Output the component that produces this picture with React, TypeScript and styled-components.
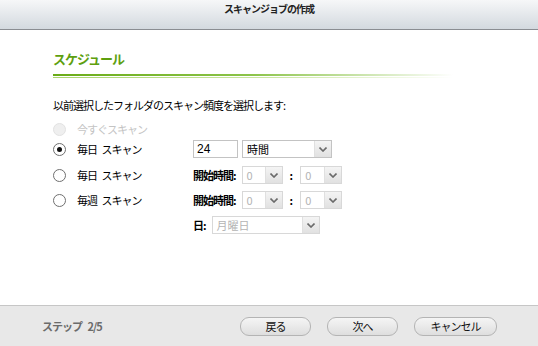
import React from 'react';
import styled, { createGlobalStyle } from 'styled-components';

const GlobalStyle = createGlobalStyle`
  html, body {
    margin: 0;
    padding: 0;
    background: #fff;
  }
  body {
    font-family: 'Noto Sans CJK JP', 'Liberation Sans', sans-serif;
    font-size: 11px;
    color: #000;
  }
`;

const Window = styled.div`
  width: 538px;
  height: 346px;
  display: flex;
  flex-direction: column;
  overflow: hidden;
`;

const Header = styled.div`
  height: 30px;
  flex: none;
  display: flex;
  justify-content: center;
  align-items: flex-start;
  box-sizing: border-box;
  padding-top: 1px;
  background: linear-gradient(#f6f7f8, #d3d9df);
  border-bottom: 1px solid #8a8d92;
`;

const HeaderTitle = styled.div`
  font-size: 10px;
  font-weight: 700;
  letter-spacing: -1px;
  color: #222;
  line-height: 16px;
`;

const Body = styled.div`
  flex: 1;
  padding: 20px 0 0 53px;
`;

const SectionTitle = styled.div`
  font-size: 13px;
  font-weight: 700;
  color: #5e9f0f;
  letter-spacing: -1px;
  line-height: 18px;
`;

const Rule = styled.div`
  width: 400px;
  height: 2px;
  margin-top: 6px;
  background: linear-gradient(90deg, #6aac17 0%, #8cc44a 50%, #ffffff 100%);
  &::after {
    content: '';
    display: block;
    position: relative;
    top: 3px;
    height: 1px;
    background: linear-gradient(90deg, #a9d56f 0%, #cbe6a4 55%, #ffffff 100%);
  }
`;

const Intro = styled.div`
  margin-top: 21px;
  line-height: 16px;
  letter-spacing: -1px;
`;

const Form = styled.div`
  display: grid;
  grid-template-columns: 140px auto;
  margin-top: 6px;
`;

const Row = styled.div<{ $top: number }>`
  display: contents;
  & > * {
    margin-top: ${(p) => p.$top}px;
  }
`;

const RadioLabel = styled.label<{ $disabled?: boolean }>`
  display: flex;
  align-items: center;
  gap: 11px;
  height: 20px;
  color: ${(p) => (p.$disabled ? '#c4c4c4' : '#000')};
  letter-spacing: -1px;
  word-spacing: 3px;
`;

const RadioCircle = styled.span<{ $checked?: boolean; $disabled?: boolean }>`
  width: 13px;
  height: 13px;
  box-sizing: border-box;
  border-radius: 50%;
  border: 1px solid ${(p) => (p.$disabled ? '#e2e2e2' : '#6f6f6f')};
  background: ${(p) => (p.$disabled ? '#efefef' : '#fff')};
  display: flex;
  align-items: center;
  justify-content: center;
  &::after {
    content: '';
    width: 5px;
    height: 5px;
    border-radius: 50%;
    background: ${(p) => (p.$checked ? '#111' : 'transparent')};
  }
`;

const Controls = styled.div`
  display: flex;
  align-items: center;
  gap: 4px;
  height: 20px;
`;

const FieldLabel = styled.span`
  font-weight: 700;
  letter-spacing: -1px;
  margin-right: 2px;
`;

const TextBox = styled.div`
  width: 45px;
  height: 18px;
  box-sizing: border-box;
  border: 1px solid #c3c3c3;
  padding-left: 3px;
  font-family: 'Liberation Sans', sans-serif;
  font-size: 12px;
  line-height: 16px;
`;

const SelectBox = styled.div<{ $width: number; $disabled?: boolean }>`
  width: ${(p) => p.$width}px;
  height: 18px;
  box-sizing: border-box;
  border: 1px solid ${(p) => (p.$disabled ? '#d8d8d8' : '#c3c3c3')};
  display: flex;
  color: ${(p) => (p.$disabled ? '#b4b4b4' : '#000')};
`;

const SelectText = styled.span`
  flex: 1;
  padding-left: 4px;
  line-height: 16px;
  font-size: 11px;
`;

const Arrow = styled.span`
  width: 16px;
  border-left: 1px solid #e0e0e0;
  background: linear-gradient(#f4f4f4, #e1e1e1);
  display: flex;
  align-items: center;
  justify-content: center;
`;

const Colon = styled.span`
  font-weight: 700;
  margin: 0 3px;
`;

const Footer = styled.div`
  height: 41px;
  flex: none;
  box-sizing: border-box;
  border-top: 1px solid #c6c6c6;
  background: #e8e8e8;
  display: flex;
  align-items: center;
  padding: 0 0 0 42px;
`;

const Step = styled.div`
  width: 198px;
  font-weight: 700;
  color: #6b6b6b;
  letter-spacing: -1px;
  word-spacing: 4px;
`;

const Buttons = styled.div`
  display: flex;
  gap: 16px;
`;

const Button = styled.button<{ $width: number }>`
  width: ${(p) => p.$width}px;
  height: 19px;
  padding: 0;
  border: 1px solid #b4b4b4;
  border-radius: 9px;
  background: linear-gradient(#f5f5f5, #dedede);
  font-family: 'Noto Sans CJK JP', sans-serif;
  font-size: 11px;
  line-height: 16px;
  color: #111;
  letter-spacing: -1px;
`;

const Chevron = () => (
  <svg width="8" height="5" viewBox="0 0 8 5">
    <path d="M0.5 0.5 L4 4 L7.5 0.5" fill="none" stroke="#6a6a6a" strokeWidth="1.6" />
  </svg>
);

const Select = ({ width, value, disabled }: { width: number; value: string; disabled?: boolean }) => (
  <SelectBox $width={width} $disabled={disabled}>
    <SelectText>{value}</SelectText>
    <Arrow>
      <Chevron />
    </Arrow>
  </SelectBox>
);

const Radio = ({ label, checked, disabled }: { label: string; checked?: boolean; disabled?: boolean }) => (
  <RadioLabel $disabled={disabled}>
    <RadioCircle $checked={checked} $disabled={disabled} />
    {label}
  </RadioLabel>
);

const App: React.FC = () => {
  return (
    <Window>
      <GlobalStyle />
      <Header>
        <HeaderTitle>スキャンジョブの作成</HeaderTitle>
      </Header>
      <Body>
        <SectionTitle>スケジュール</SectionTitle>
        <Rule />
        <Intro>以前選択したフォルダのスキャン頻度を選択します:</Intro>
        <Form>
          <Row $top={0}>
            <Radio label="今すぐスキャン" disabled />
            <div />
          </Row>
          <Row $top={0}>
            <Radio label="毎日 スキャン" checked />
            <Controls>
              <TextBox>24</TextBox>
              <Select width={90} value="時間" />
            </Controls>
          </Row>
          <Row $top={6}>
            <Radio label="毎日 スキャン" />
            <Controls>
              <FieldLabel>開始時間:</FieldLabel>
              <Select width={41} value="0" disabled />
              <Colon>:</Colon>
              <Select width={42} value="0" disabled />
            </Controls>
          </Row>
          <Row $top={5}>
            <Radio label="毎週 スキャン" />
            <Controls>
              <FieldLabel>開始時間:</FieldLabel>
              <Select width={41} value="0" disabled />
              <Colon>:</Colon>
              <Select width={42} value="0" disabled />
            </Controls>
          </Row>
          <Row $top={5}>
            <div />
            <Controls>
              <FieldLabel>日:</FieldLabel>
              <Select width={108} value="月曜日" disabled />
            </Controls>
          </Row>
        </Form>
      </Body>
      <Footer>
        <Step>ステップ 2/5</Step>
        <Buttons>
          <Button $width={71}>戻る</Button>
          <Button $width={71}>次へ</Button>
          <Button $width={83}>キャンセル</Button>
        </Buttons>
      </Footer>
    </Window>
  );
};

export default App;
